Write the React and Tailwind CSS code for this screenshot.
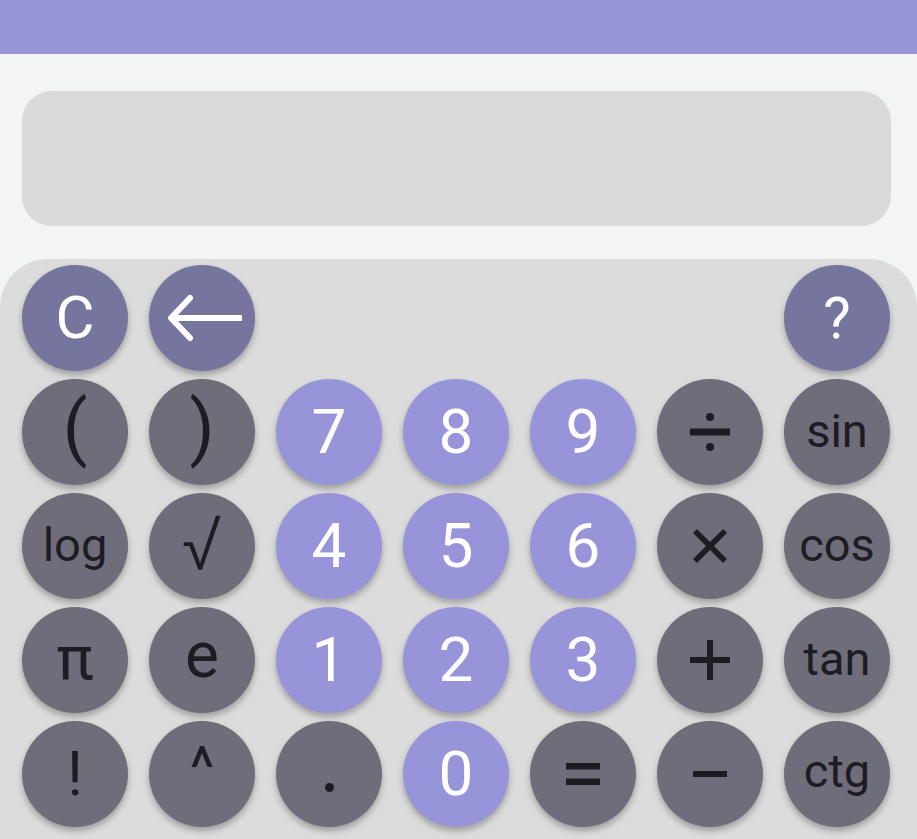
import React from 'react';

const font = { fontFamily: 'Roboto, "Noto Sans", sans-serif' };

function Arrow() {
  return (
    <svg width="80" height="50" viewBox="0 0 80 50" fill="none" stroke="white" strokeWidth="6" strokeLinecap="round" strokeLinejoin="round" className="ml-[6px]">
      <path d="M77 25H6" strokeLinecap="butt" />
      <path d="M25 5L6 25L25 45" />
    </svg>
  );
}

function Divide() {
  return (
    <svg width="40" height="40" viewBox="0 0 40 40" fill="#1d1c22">
      <rect x="0" y="16.5" width="40" height="7" />
      <circle cx="20" cy="5" r="4" />
      <circle cx="20" cy="35" r="4" />
    </svg>
  );
}

function Times() {
  return (
    <svg width="36" height="36" viewBox="0 0 36 36" stroke="#1d1c22" strokeWidth="5.5">
      <path d="M3 3L33 33M33 3L3 33" />
    </svg>
  );
}

function Plus() {
  return (
    <svg width="40" height="40" viewBox="0 0 40 40" fill="#1d1c22">
      <rect x="0" y="17" width="40" height="6" />
      <rect x="17" y="0" width="6" height="40" />
    </svg>
  );
}

function Minus() {
  return (
    <svg width="34" height="8" viewBox="0 0 34 8" fill="#1d1c22">
      <rect x="0" y="1" width="34" height="6" />
    </svg>
  );
}

function Equals() {
  return (
    <svg width="34" height="26" viewBox="0 0 34 26" fill="#1d1c22">
      <rect x="0" y="2" width="34" height="6.5" />
      <rect x="0" y="17.5" width="34" height="6.5" />
    </svg>
  );
}

// the "." key: a plain dot sitting a bit below the middle
const Dot = () => <span className="w-[9px] h-[9px] rounded-full bg-[#1d1c22] mt-[26px]" />;

const keys = [
  { l: 'C', k: 'top', cls: 'text-[60px]' },
  { l: <Arrow />, k: 'top' },
  null, null, null, null,
  { l: '?', k: 'top', cls: 'text-[58px]' },

  { l: '(', k: 'op', cls: 'text-[72px] pb-2' },
  { l: ')', k: 'op', cls: 'text-[72px] pb-2' },
  { l: '7', k: 'num' },
  { l: '8', k: 'num' },
  { l: '9', k: 'num' },
  { l: <Divide />, k: 'op' },
  { l: 'sin', k: 'op', cls: 'text-[47px] pb-1' },

  { l: 'log', k: 'op', cls: 'text-[47px] pb-1' },
  { l: '√', k: 'op', cls: 'text-[76px] font-light pb-1' },
  { l: '4', k: 'num' },
  { l: '5', k: 'num' },
  { l: '6', k: 'num' },
  { l: <Times />, k: 'op' },
  { l: 'cos', k: 'op', cls: 'text-[47px] pb-1' },

  { l: 'π', k: 'op', cls: 'text-[62px] pb-1' },
  { l: 'e', k: 'op', cls: 'text-[64px] pb-2' },
  { l: '1', k: 'num' },
  { l: '2', k: 'num' },
  { l: '3', k: 'num' },
  { l: <Plus />, k: 'op' },
  { l: 'tan', k: 'op', cls: 'text-[47px] pb-1' },

  { l: '!', k: 'op', cls: 'text-[62px]' },
  { l: '^', k: 'op', cls: 'text-[60px] pb-3' },
  { l: <Dot />, k: 'op' },
  { l: '0', k: 'num' },
  { l: <Equals />, k: 'op' },
  { l: <Minus />, k: 'op' },
  { l: 'ctg', k: 'op', cls: 'text-[47px] pb-2' },
];

const kinds = {
  top: 'bg-[#76759d] text-white',
  num: 'bg-[#9894d9] text-white text-[62px]',
  op: 'bg-[#6e6d79] text-[#1d1c22]',
};

export default function App() {
  return (
    <div className="min-h-screen flex flex-col bg-[#f3f5f4]" style={font}>
      <div className="h-[54px] bg-[#9995d9]" />
      <div className="pl-[22px] pr-[26px] pt-[37px] pb-[33px]">
        <div className="h-[135px] rounded-[30px] bg-[#dadada]" />
      </div>
      <div className="flex-1 rounded-t-[48px] bg-[#dcdcdc] px-[22px] pt-[6px] pb-4">
        <div className="grid grid-cols-[repeat(7,106px)] gap-x-[21px] gap-y-[8px]">
          {keys.map((key, i) =>
            key ? (
              <button
                key={i}
                className={`w-[106px] h-[106px] rounded-full flex items-center justify-center leading-none shadow-[0_4px_6px_rgba(0,0,0,0.28)] ${kinds[key.k]} ${key.cls || ''}`}
              >
                {key.l}
              </button>
            ) : (
              <div key={i} />
            )
          )}
        </div>
      </div>
    </div>
  );
}
